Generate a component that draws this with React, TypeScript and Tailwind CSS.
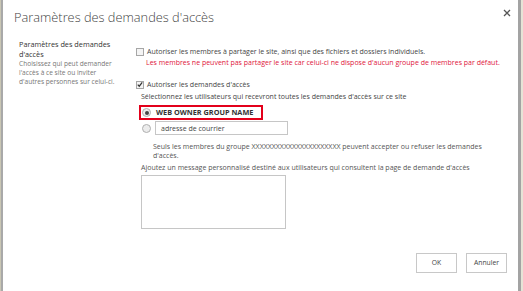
import React from "react";

const font = { fontFamily: '"Open Sans", "Noto Sans", sans-serif' };

function Checkbox({ checked }: { checked?: boolean }) {
  return (
    <span className="w-[8px] h-[8px] border border-[#a6a6a6] bg-[#f4f4f4] flex items-center justify-center shrink-0">
      {checked && (
        <svg width="7" height="7" viewBox="0 0 8 8">
          <path d="M1 4.2 L3 6.3 L7 1.2" fill="none" stroke="#333" strokeWidth="1.6" />
        </svg>
      )}
    </span>
  );
}

function Radio({ checked }: { checked?: boolean }) {
  return (
    <span className="w-[9px] h-[9px] rounded-full border border-[#b0b0b0] bg-[#ececec] flex items-center justify-center shrink-0">
      {checked && <span className="w-[4px] h-[4px] rounded-full bg-[#444]" />}
    </span>
  );
}

export default function App() {
  return (
    <div className="w-[523px] h-[291px] flex bg-white text-[#444]" style={font}>
      {/* bordure gauche */}
      <div className="w-[1px] bg-[#c9c6b4]" />
      <div className="w-[2px] bg-[#a9a9a9]" />

      <div className="flex-1 flex flex-col">
        {/* en-tête */}
        <div className="flex justify-between items-start pl-[11px] pr-[7px] pt-[8px] h-[36px]">
          <h1 className="text-[12.8px] font-light text-[#444] leading-[18px]">Paramètres des demandes d'accès</h1>
          <svg width="8" height="8" viewBox="0 0 8 8" className="mt-[1px]">
            <path d="M1 1 L7 7 M7 1 L1 7" stroke="#555" strokeWidth="1.3" />
          </svg>
        </div>

        <div className="flex flex-1">
          {/* colonne gauche */}
          <div className="w-[130px] pl-[16px] pt-[3px]">
            <div className="text-[7.3px] leading-[10px] text-[#333] w-[100px]">Paramètres des demandes d'accès</div>
            <div className="text-[6.6px] leading-[9px] text-[#777] w-[104px]">
              Choisissez qui peut demander l'accès à ce site ou inviter d'autres personnes sur celui-ci.
            </div>
          </div>

          {/* colonne droite */}
          <div className="flex-1 text-[7px] leading-[11px] pt-[10px] whitespace-nowrap">
            <div className="flex items-center gap-[3px] ml-[3px]">
              <Checkbox />
              <span>Autoriser les membres à partager le site, ainsi que des fichiers et dossiers individuels.</span>
            </div>
            <div className="ml-[13px] text-[#e0153b]">
              Les membres ne peuvent pas partager le site car celui-ci ne dispose d'aucun groupe de membres par défaut.
            </div>

            <div className="flex items-center gap-[3px] ml-[3px] mt-[11px]">
              <Checkbox checked />
              <span>Autoriser les demandes d'accès</span>
            </div>
            <div className="ml-[8px] mt-[1px]">Sélectionnez les utilisateurs qui recevront toutes les demandes d'accès sur ce site</div>

            <div className="ml-[6px] mt-[3px] w-[124px] h-[15px] border-2 border-[#e3001b] flex items-center pl-[1px] gap-[5px]">
              <Radio checked />
              <span className="font-bold text-[7.3px] text-[#333]">WEB OWNER GROUP NAME</span>
            </div>
            <div className="flex items-center ml-[9px] mt-[1px] gap-[4px]">
              <Radio />
              <div className="w-[133px] h-[14px] border border-[#c6c6c6] pl-[5px] flex items-center">adresse de courrier</div>
            </div>
            <div className="ml-[20px] mt-[7px] w-[340px] leading-[9px] text-[#555] whitespace-normal">
              Seuls les membres du groupe XXXXXXXXXXXXXXXXXXXXXX peuvent accepter ou refuser les demandes d'accès.
            </div>
            <div className="ml-[8px] mt-[2px] text-[#555]">
              Ajoutez un message personnalisé destiné aux utilisateurs qui consultent la page de demande d'accès
            </div>
            <div className="ml-[8px] mt-[2px] w-[145px] h-[54px] border border-[#c6c6c6]" />
          </div>
        </div>

        {/* pied */}
        <div className="flex justify-end gap-[9px] pr-[11px] pb-[18px]">
          <button className="w-[41px] h-[20px] border border-[#c8c8c8] bg-white text-[6.8px] text-[#444]">OK</button>
          <button className="w-[41px] h-[20px] border border-[#c8c8c8] bg-white text-[6.8px] text-[#444]">Annuler</button>
        </div>
      </div>

      {/* bordure droite */}
      <div className="w-[3px] bg-[#a3a3a3]" />
      <div className="w-[2px] bg-[#e6e3d6]" />
    </div>
  );
}
